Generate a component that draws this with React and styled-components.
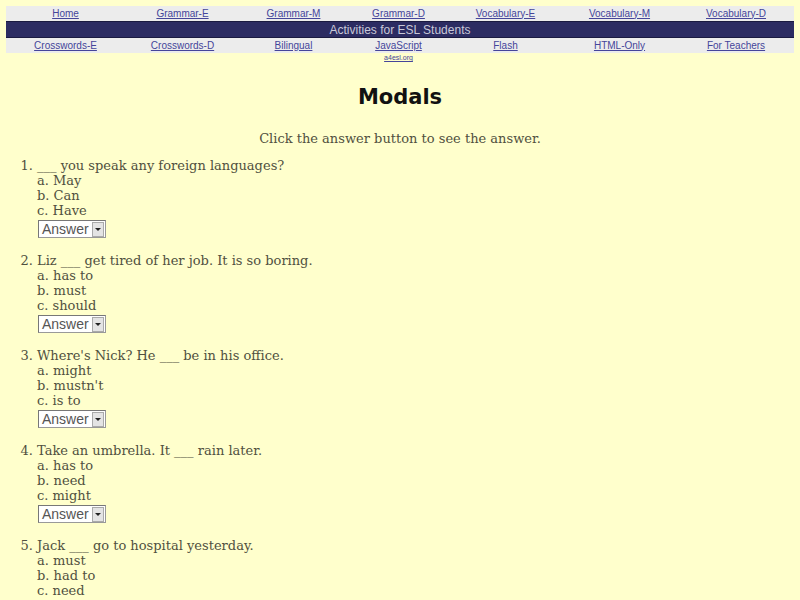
import React from "react";
import styled, { createGlobalStyle } from "styled-components";

const Global = createGlobalStyle`
  html, body { margin: 0; padding: 0; background: #ffffcc; }
  body { font-family: "DejaVu Serif", serif; color: #505040; }
`;

const Page = styled.div`
  padding: 6px 6px 0 6px;
`;

const NavRow = styled.div`
  display: grid;
  grid-template-columns: 119px 115px 107px 103px 111px 117px 116px;
  background: ${(p) => (p.$plain ? "transparent" : "#ececec")};
  height: ${(p) => p.$h || 15}px;
  align-items: center;
`;

const NavCell = styled.div`
  text-align: center;
  font-family: "Liberation Sans", Arial, sans-serif;
  font-size: ${(p) => p.$size || 10}px;
  line-height: 1;
`;

const NavLink = styled.a`
  color: #45459a;
  text-decoration: underline;
`;

const Banner = styled.div`
  background: #2c2c62;
  color: #c8c8d8;
  height: 15px;
  display: flex;
  align-items: center;
  justify-content: center;
  font-family: "Liberation Sans", Arial, sans-serif;
  font-size: 12px;
  border-top: 1px solid #1a1a40;
  border-bottom: 1px solid #1a1a40;
`;

const Title = styled.h1`
  margin: 20px 0 0 0;
  text-align: center;
  font-family: "DejaVu Sans", sans-serif;
  font-weight: bold;
  font-size: 21px;
  color: #111;
  line-height: 30px;
`;

const Sub = styled.p`
  margin: 19px 0 0 0;
  text-align: center;
  font-size: 13px;
  line-height: 16px;
`;

const List = styled.ol`
  margin: 11px 0 0 0;
  padding-left: 31px;
  font-size: 13px;
  line-height: 15px;
`;

const Item = styled.li`
  margin-bottom: 15px;
`;

const Option = styled.div``;

const Select = styled.div`
  display: inline-flex;
  align-items: center;
  margin: 2px 0 0 1px;
  height: 16px;
  padding: 0 1px 0 3px;
  background: #fff;
  border: 1px solid #999;
  border-top-color: #777;
  border-left-color: #777;
  font-family: "Liberation Sans", Arial, sans-serif;
  font-size: 14px;
  color: #555;
  gap: 3px;
`;

const Arrow = styled.span`
  width: 10px;
  height: 13px;
  background: #e4e4e4;
  border: 1px solid #aaa;
  display: flex;
  align-items: center;
  justify-content: center;
  &::after {
    content: "";
    border-left: 3px solid transparent;
    border-right: 3px solid transparent;
    border-top: 3px solid #222;
  }
`;

const top = ["Home", "Grammar-E", "Grammar-M", "Grammar-D", "Vocabulary-E", "Vocabulary-M", "Vocabulary-D"];
const bottom = ["Crosswords-E", "Crosswords-D", "Bilingual", "JavaScript", "Flash", "HTML-Only", "For Teachers"];

const questions = [
  ["___ you speak any foreign languages?", ["May", "Can", "Have"]],
  ["Liz ___ get tired of her job. It is so boring.", ["has to", "must", "should"]],
  ["Where's Nick? He ___ be in his office.", ["might", "mustn't", "is to"]],
  ["Take an umbrella. It ___ rain later.", ["has to", "need", "might"]],
  ["Jack ___ go to hospital yesterday.", ["must", "had to", "need"]],
];

export default function App() {
  return (
    <>
      <Global />
      <Page>
        <NavRow>
          {top.map((t) => (
            <NavCell key={t}><NavLink>{t}</NavLink></NavCell>
          ))}
        </NavRow>
        <Banner>Activities for ESL Students</Banner>
        <NavRow>
          {bottom.map((t) => (
            <NavCell key={t}><NavLink>{t}</NavLink></NavCell>
          ))}
        </NavRow>
        <NavRow $plain $h={9}>
          <NavCell /><NavCell /><NavCell />
          <NavCell $size={7}><NavLink>a4esl.org</NavLink></NavCell>
        </NavRow>
        <Title>Modals</Title>
        <Sub>Click the answer button to see the answer.</Sub>
        <List>
          {questions.map(([q, opts]) => (
            <Item key={q}>
              {q}
              {opts.map((o, i) => (
                <Option key={o}>{"abc"[i]}. {o}</Option>
              ))}
              <Select>Answer<Arrow /></Select>
            </Item>
          ))}
        </List>
      </Page>
    </>
  );
}
